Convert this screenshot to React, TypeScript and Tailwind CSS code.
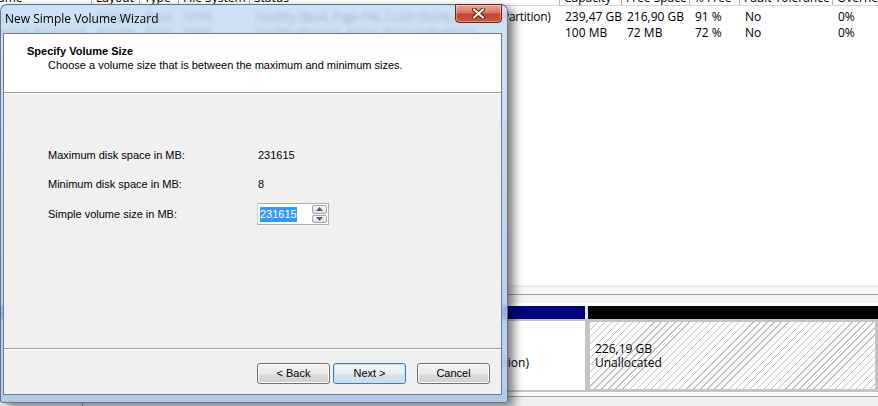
const columns = [
  { label: "Name", w: "w-[107px]" },
  { label: "Layout", w: "w-[48px]" },
  { label: "Type", w: "w-[39px]" },
  { label: "File System", w: "w-[71px]" },
  { label: "Status", w: "w-[310px]" },
  { label: "Capacity", w: "w-[62px]" },
  { label: "Free Space", w: "w-[68px]" },
  { label: "% Free", w: "w-[50px]" },
  { label: "Fault Tolerance", w: "w-[93px]" },
  { label: "Overhead", w: "w-[70px]" },
];

const volumes = [
  ["(C:)", "Simple", "Basic", "NTFS", "Healthy (Boot, Page File, Crash Dump, Primary Partition)", "239,47 GB", "216,90 GB", "91 %", "No", "0%"],
  ["System Reserved", "Simple", "Basic", "NTFS", "Healthy (System, Active, Primary Partition)", "100 MB", "72 MB", "72 %", "No", "0%"],
];

const DiskManager = () => (
  <div className="flex h-full flex-col">
    <div className="-ml-[15px] -mt-[10px] flex h-[16px] shrink-0 border-b border-[#d5d5d5] bg-white">
      {columns.map((c) => (
        <div
          key={c.label}
          className={`${c.w} shrink-0 overflow-hidden whitespace-nowrap border-r border-[#b5b5b5] pl-[4px] leading-[16px]`}
        >
          {c.label}
        </div>
      ))}
    </div>

    <div className="-ml-[15px] shrink-0 pt-[3px]">
      {volumes.map((row) => (
        <div key={row[0]} className="flex h-[16px] leading-[16px]">
          {row.map((cell, i) => (
            <div
              key={i}
              className={`${columns[i].w} shrink-0 overflow-hidden whitespace-nowrap pl-[5px] ${
                i === 4 ? "tracking-[-0.3px]" : ""
              }`}
            >
              {cell}
            </div>
          ))}
        </div>
      ))}
    </div>

    <div className="flex-1" />

    {/* splitter + graphical view */}
    <div className="h-[2px] shrink-0 bg-[#ececec]" />
    <div className="h-[7px] shrink-0 bg-[#f7f7f7]" />
    <div className="h-[1px] shrink-0 bg-[#a0a0a0]" />
    <div className="h-[8px] shrink-0 bg-[#f4f4f4]" />
    <div className="h-[3px] shrink-0 bg-white" />

    <div className="flex h-[13px] shrink-0 gap-[3px] bg-[#e4e4e4]">
      <div className="flex-1 bg-[#000080]" />
      <div className="w-[290px] bg-black" />
    </div>

    <div className="flex h-[73px] shrink-0">
      <div className="flex flex-1 items-center justify-end border-[2px] border-r-[3px] border-[#c4c4c4] bg-white pb-[14px] pr-[56px] leading-[14px]">
        <div className="whitespace-nowrap">
          <div>(C:)</div>
          <div>239,47 GB NTFS</div>
          <div>Healthy (Boot, Page File, Crash Dump, Primary Partition)</div>
        </div>
      </div>
      <div className="flex w-[290px] flex-col justify-center border-[3px] border-l-[2px] border-[#c4c4c4] bg-white bg-[repeating-linear-gradient(135deg,#c0c0c0_0px,#c0c0c0_1px,transparent_1px,transparent_5px)] pl-[5px] leading-[14px]">
        <div>226,19 GB</div>
        <div>Unallocated</div>
      </div>
    </div>

    <div className="h-[4px] shrink-0 bg-white" />
    <div className="h-[1px] shrink-0 bg-[#a0a0a0]" />
    <div className="flex h-[9px] shrink-0 items-end bg-[#f0f0f0]">
      <div className="h-[3px] w-[83px] border-r border-[#8a8a8a]" />
    </div>
  </div>
);

const WinButton = ({ label, primary }: { label: string; primary?: boolean }) => (
  <button
    className={`h-[21px] w-[73px] rounded-[3px] border text-[11px] leading-[19px] text-black ${
      primary
        ? "border-[#3c7fb1] bg-[linear-gradient(#f3f8fc_0%,#e6eff6_50%,#d8e4ee_51%,#cedbe6_100%)] shadow-[inset_0_0_0_1px_#c6e3f6]"
        : "border-[#707070] bg-[linear-gradient(#f2f2f2_0%,#ebebeb_50%,#dddddd_51%,#cfcfcf_100%)] shadow-[inset_0_0_0_1px_#fcfcfc]"
    }`}
  >
    {label}
  </button>
);

const Wizard = () => (
  <div className="absolute left-0 top-[4px] flex h-[399px] w-[508px] flex-col rounded-t-[7px] rounded-b-[3px] border border-[#3d4d60]/70 bg-[linear-gradient(180deg,rgba(196,218,242,0.82),rgba(170,200,234,0.88))] shadow-[6px_4px_10px_rgba(0,0,0,0.5)] backdrop-blur-[2px]">
    <div className="relative h-[28px] shrink-0 pl-[4px] font-['Open_Sans',sans-serif] text-[12px] leading-[28px] text-black">
      New Simple Volume Wizard
      <div className="absolute -top-[1px] right-[5px] flex h-[19px] w-[47px] items-center justify-center rounded-b-[4px] border border-[#6e2417] bg-[linear-gradient(#e9a898_0%,#d8745f_45%,#c3452c_55%,#c95a3f_100%)] shadow-[inset_0_0_0_1px_rgba(255,255,255,0.35)]">
        <svg width="13" height="11" viewBox="0 0 13 11">
          <path d="M2 1.5 L11 9.5 M11 1.5 L2 9.5" stroke="#5a1a10" strokeWidth="4" strokeLinecap="round" />
          <path d="M2 1.5 L11 9.5 M11 1.5 L2 9.5" stroke="#ffffff" strokeWidth="2.2" strokeLinecap="round" />
        </svg>
      </div>
    </div>

    <div className="mb-[7px] ml-[2px] mr-[5px] flex flex-1 flex-col border border-[#6d7d8e] bg-[#f0f0f0] font-['Liberation_Sans',Arial,sans-serif] text-[11px] text-black">
      <div className="h-[59px] shrink-0 border-b border-[#a0a0a0] bg-white pl-[23px] pt-[11px] leading-[13px]">
        <div className="font-bold">Specify Volume Size</div>
        <div className="ml-[21px] mt-[1px]">Choose a volume size that is between the maximum and minimum sizes.</div>
      </div>

      <div className="flex flex-1 flex-col border-t border-white pl-[44px] pt-[50px]">
        <div className="flex h-[22px] items-center">
          <div className="w-[210px]">Maximum disk space in MB:</div>
          <div>231615</div>
        </div>
        <div className="mt-[7px] flex h-[22px] items-center">
          <div className="w-[210px]">Minimum disk space in MB:</div>
          <div>8</div>
        </div>
        <div className="mt-[8px] flex h-[22px] items-center">
          <div className="w-[209px]">Simple volume size in MB:</div>
          <div className="flex h-[22px] border border-[#abadb3] border-l-[#c5d3e6] bg-white">
            <div className="flex w-[53px] items-center pl-[2px]">
              <span className="bg-[#3399ff] leading-[15px] text-white">231615</span>
            </div>
            <div className="flex w-[17px] flex-col gap-[1px] p-[1px]">
              <div className="flex flex-1 items-center justify-center rounded-[2px] border border-[#a5a5a5] bg-[linear-gradient(#f6f6f6,#dedede)]">
                <svg width="7" height="4" viewBox="0 0 7 4">
                  <path d="M0 4 L3.5 0 L7 4 Z" fill="#4d6185" />
                </svg>
              </div>
              <div className="flex flex-1 items-center justify-center rounded-[2px] border border-[#a5a5a5] bg-[linear-gradient(#f6f6f6,#dedede)]">
                <svg width="7" height="4" viewBox="0 0 7 4">
                  <path d="M0 0 L7 0 L3.5 4 Z" fill="#4d6185" />
                </svg>
              </div>
            </div>
          </div>
        </div>
      </div>

      <div className="h-[46px] shrink-0 border-t border-[#a0a0a0]">
        <div className="flex h-full items-start justify-end border-t border-white pr-[11px] pt-[13px]">
          <WinButton label="< Back" />
          <div className="ml-[3px]">
            <WinButton label="Next >" primary />
          </div>
          <div className="ml-[11px]">
            <WinButton label="Cancel" />
          </div>
        </div>
      </div>
    </div>
  </div>
);

export default function App() {
  return (
    <div className="relative h-[406px] w-[878px] overflow-hidden bg-white font-['Open_Sans',sans-serif] text-[12px] text-black">
      <DiskManager />
      <Wizard />
    </div>
  );
}
